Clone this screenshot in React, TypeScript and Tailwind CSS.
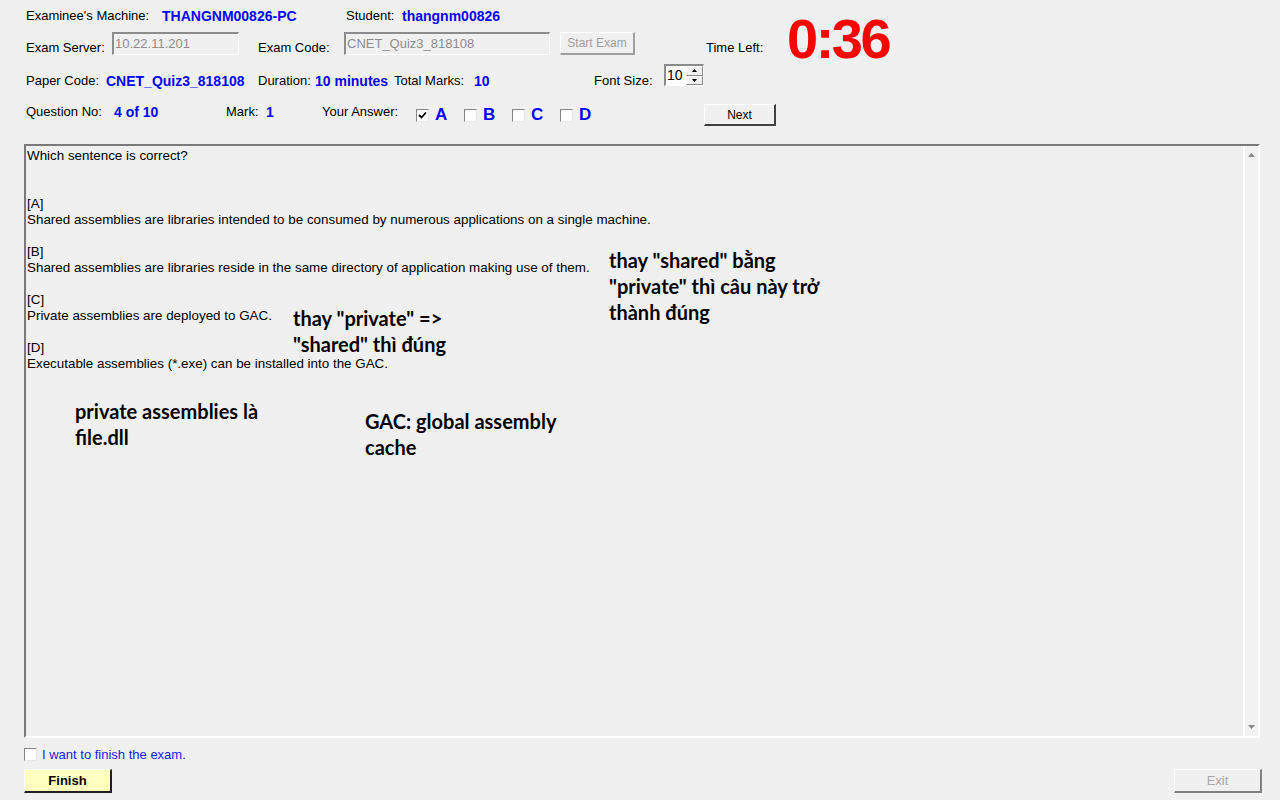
import React from "react";

const blue = "text-[#0000ff] font-bold text-[14px]";

function Sunken({ w, text }: { w: string; text: string }) {
  return (
    <div
      className={`${w} h-[23px] border-t-2 border-l-2 border-t-[#8c8c8c] border-l-[#8c8c8c] border-b border-r border-b-white border-r-white bg-[#f0f0f0] flex items-center pl-[1px] text-[13px] text-[#8d8d8d]`}
    >
      {text}
    </div>
  );
}

function Check({ checked }: { checked?: boolean }) {
  return (
    <div className="w-[13px] h-[13px] bg-white border-t border-l border-[#888888] border-b border-r border-b-[#e8e8e8] border-r-[#e8e8e8] flex items-center justify-center">
      {checked && (
        <svg width="9" height="9" viewBox="0 0 9 9">
          <path d="M1 4 L3.5 6.5 L8 1.5" stroke="#000" strokeWidth="1.8" fill="none" />
        </svg>
      )}
    </div>
  );
}

function Note({ lines, className }: { lines: string[]; className: string }) {
  return (
    <div
      className={`absolute ${className} font-['Lato','Noto_Sans',sans-serif] font-bold text-[20px] leading-[26px] text-black whitespace-nowrap`}
    >
      {lines.map((l, i) => (
        <div key={i}>{l}</div>
      ))}
    </div>
  );
}

export default function App() {
  const question = [
    "Which sentence is correct?",
    "",
    "",
    "[A]",
    "Shared assemblies are libraries intended to be consumed by numerous applications on a single machine.",
    "",
    "[B]",
    "Shared assemblies are libraries reside in the same directory of application making use of them.",
    "",
    "[C]",
    "Private assemblies are deployed to GAC.",
    "",
    "[D]",
    "Executable assemblies (*.exe) can be installed into the GAC.",
  ];

  return (
    <div className="relative w-[1280px] h-[800px] bg-[#f0f0f0] overflow-hidden font-['Liberation_Sans',Arial,sans-serif] text-[13px] leading-[16px] text-black">
      {/* top header */}
      <div className="flex h-[55px] items-start">
        <div className="w-[787px] flex flex-col">
          <div className="flex h-[32px] items-center pl-[26px]">
            <span className="w-[136px]">Examinee's Machine:</span>
            <span className={`w-[184px] ${blue}`}>THANGNM00826-PC</span>
            <span className="w-[56px]">Student:</span>
            <span className={blue}>thangnm00826</span>
          </div>
          <div className="flex h-[23px] pl-[26px]">
            <span className="w-[86px] pt-[8px]">Exam Server:</span>
            <Sunken w="w-[127px]" text="10.22.11.201" />
            <span className="w-[19px]" />
            <span className="w-[86px] pt-[8px]">Exam Code:</span>
            <Sunken w="w-[206px]" text="CNET_Quiz3_818108" />
            <span className="w-[10px]" />
            <div className="w-[75px] h-[23px] border-t border-l border-white border-b-2 border-r-2 border-b-[#a0a0a0] border-r-[#a0a0a0] flex items-center justify-center text-[12px] text-[#a0a0a0]">
              Start Exam
            </div>
            <span className="w-[71px]" />
            <span className="pt-[8px]">Time Left:</span>
          </div>
        </div>
        <div className="pt-[11px] text-[#ff0000] font-bold text-[56px] leading-none tracking-[-2.5px]">
          0:36
        </div>
      </div>

      <div className="flex h-[22px] mt-[9px] pl-[26px]">
        <span className="w-[80px] pt-[9px]">Paper Code:</span>
        <span className={`w-[152px] pt-[9px] ${blue}`}>CNET_Quiz3_818108</span>
        <span className="w-[57px] pt-[9px]">Duration:</span>
        <span className={`w-[79px] pt-[9px] ${blue}`}>10 minutes</span>
        <span className="w-[80px] pt-[9px]">Total Marks:</span>
        <span className={`w-[120px] pt-[9px] ${blue}`}>10</span>
        <span className="w-[70px] pt-[9px]">Font Size:</span>
        <div className="w-[40px] h-[22px] bg-white border-t-2 border-l-2 border-[#8c8c8c] border-b border-r border-b-white border-r-white flex">
          <span className="flex-1 text-[14px] leading-[18px] pl-[1px]">10</span>
          <div className="w-[17px] flex flex-col">
            <div className="flex-1 bg-[#f0f0f0] border-b border-r border-[#8c8c8c] border-t border-l border-t-white border-l-white flex items-center justify-center">
              <svg width="5" height="3" viewBox="0 0 5 3"><path d="M0 3 L2.5 0 L5 3 Z" fill="#000" /></svg>
            </div>
            <div className="flex-1 bg-[#f0f0f0] border-b border-r border-[#8c8c8c] border-t border-l border-t-white border-l-white flex items-center justify-center">
              <svg width="5" height="3" viewBox="0 0 5 3"><path d="M0 0 L5 0 L2.5 3 Z" fill="#000" /></svg>
            </div>
          </div>
        </div>
      </div>

      <div className="flex h-[22px] mt-[18px] pl-[26px]">
        <span className="w-[88px]">Question No:</span>
        <span className={`w-[112px] ${blue}`}>4 of 10</span>
        <span className="w-[40px]">Mark:</span>
        <span className={`w-[56px] ${blue}`}>1</span>
        <span className="w-[94px]">Your Answer:</span>
        {["A", "B", "C", "D"].map((l, i) => (
          <div key={l} className={`${i === 3 ? "w-[144px]" : "w-[48px]"} flex items-center h-[22px]`}>
            <Check checked={i === 0} />
            <span className="ml-[6px] text-[17px] leading-[20px] font-bold text-[#0000ff]">{l}</span>
          </div>
        ))}
        <div className="w-[72px] h-[22px] border-t border-l border-white border-b-2 border-r-2 border-b-[#404040] border-r-[#404040] bg-[#f0f0f0] flex items-center justify-center text-[12px]">
          Next
        </div>
      </div>

      {/* question box */}
      <div className="mt-[18px] ml-[24px] mr-[20px] h-[594px] flex border-t-2 border-l-2 border-t-[#7a7a7a] border-l-[#7a7a7a] border-b-2 border-r-2 border-b-white border-r-white">
        <div className="flex-1 pl-[1px] pt-[2px] text-[13.4px]">
          {question.map((l, i) => (
            <div key={i} className="h-[16px] whitespace-nowrap">
              {l}
            </div>
          ))}
        </div>
        <div className="w-[15px] border-l-2 border-l-white bg-[#f2f2f2] flex flex-col justify-between items-center py-[7px]">
          <svg width="7" height="4" viewBox="0 0 7 4"><path d="M0 4 L3.5 0 L7 4 Z" fill="#8a8a8a" /></svg>
          <svg width="7" height="4" viewBox="0 0 7 4"><path d="M0 0 L7 0 L3.5 4 Z" fill="#8a8a8a" /></svg>
        </div>
      </div>

      {/* bottom */}
      <div className="flex items-center mt-[10px] pl-[24px] h-[13px]">
        <Check />
        <span className="ml-[5px] text-[#1a1aff]">I want to finish the exam.</span>
      </div>
      <div className="flex justify-between mt-[8px] pl-[24px] pr-[18px]">
        <div className="w-[88px] h-[24px] bg-[#ffffc0] border-t border-l border-t-white border-l-white border-b-2 border-r-2 border-b-[#202020] border-r-[#202020] flex items-center justify-center font-bold text-[13px]">
          Finish
        </div>
        <div className="w-[88px] h-[24px] bg-[#f0f0f0] border-t border-l border-white border-b-2 border-r-2 border-b-[#808080] border-r-[#808080] flex items-center justify-center text-[13px] text-[#a8a8a8]">
          Exit
        </div>
      </div>

      {/* handwritten-style notes laid over the question */}
      <Note className="left-[609px] top-[247px]" lines={['thay "shared" bằng', '"private" thì câu này trở', "thành đúng"]} />
      <Note className="left-[293px] top-[305px]" lines={['thay "private" =>', '"shared" thì đúng']} />
      <Note className="left-[75px] top-[398px]" lines={["private assemblies là", "file.dll"]} />
      <Note className="left-[365px] top-[408px]" lines={["GAC: global assembly", "cache"]} />
    </div>
  );
}
